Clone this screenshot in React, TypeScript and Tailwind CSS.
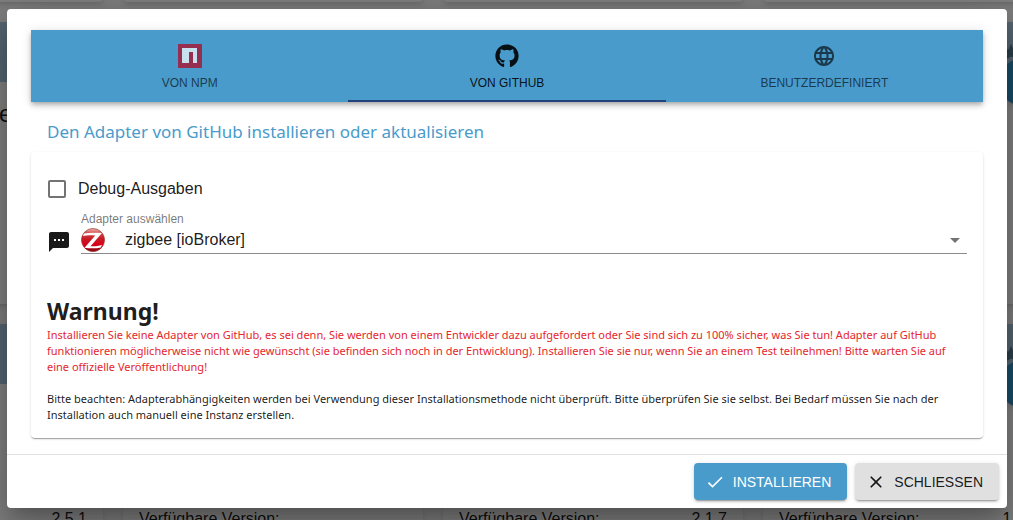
import React, { useState } from 'react';
import { FaGithub } from 'react-icons/fa';
import { MdArrowDropDown, MdCheck, MdClose, MdLanguage, MdSms, MdStar } from 'react-icons/md';

const adapters = [
  { title: 'e', label: '', version: '2.5.1' },
  { title: '', label: 'Verfügbare Version:', version: '' },
  { title: '', label: 'Verfügbare Version:', version: '2.1.7' },
  { title: '', label: 'Verfügbare Version:', version: '1.10.1' },
];

const NpmIcon = () => (
  <svg viewBox="0 0 24 24" className="h-6 w-6" aria-hidden="true">
    <path fill="#b6001b" d="M0 0h24v24H0z" />
    <path fill="#fff" d="M4 4h15v15h-4V8h-4v11H4z" />
  </svg>
);

const ZigbeeIcon = () => (
  <svg viewBox="0 0 24 24" className="h-6 w-6" aria-hidden="true">
    <defs>
      <linearGradient id="ball" x1="0" y1="0" x2="0" y2="1">
        <stop offset="0" stopColor="#efc0b8" />
        <stop offset="0.2" stopColor="#cf4a48" />
        <stop offset="0.45" stopColor="#c81a22" />
        <stop offset="0.7" stopColor="#dc001c" />
        <stop offset="1" stopColor="#7c0a10" />
      </linearGradient>
    </defs>
    <circle cx="12" cy="12" r="11.5" fill="url(#ball)" stroke="#a03030" strokeWidth="0.7" />
    <path fill="#fff" d="M3 5.500C8 4.500 15 4.500 21 5L9.500 18.300c4 .2 8-.2 11.500-1.200l-1.200 2.400c-4.600 1.100-10.500 1.100-16.300.2L14.200 7.500C9.500 7 5 7.300 1.800 8z" />
  </svg>
);

const AdapterCard = ({ title, label, version }: { title?: string; label?: string; version?: string }) => (
  <div className="h-[282px] rounded bg-white shadow-md">
    <div className="relative flex h-[60px] items-center gap-4 rounded-t bg-[#aacbe2] pl-[202px]">
      <MdStar className="h-5 w-5 text-[#5b7e95]" />
      <MdStar className="h-5 w-5 text-[#5b7e95]" />
      <div className="absolute right-4 -bottom-6 h-12 w-12 rounded-full bg-[#3399cc] shadow-md"></div>
    </div>
    <div className="h-[123px] pt-4 pl-[196px] text-2xl">{title}</div>
    <div className="flex justify-between px-4">
      <span>{label}</span>
      <span>{version}</span>
    </div>
  </div>
);

const Tab = ({ label, active, onClick, children }: { label: string; active: boolean; onClick: () => void; children: React.ReactNode }) => (
  <button
    type="button"
    role="tab"
    aria-selected={active}
    onClick={onClick}
    className={
      active
        ? 'flex flex-1 flex-col items-center gap-[7px] border-b-2 border-[#23427a] pt-3.5 text-xs text-black/90'
        : 'flex flex-1 flex-col items-center gap-[7px] border-b-2 border-transparent pt-3.5 text-xs text-black/90 opacity-70'
    }
  >
    {children}
    <span>{label}</span>
  </button>
);

const App: React.FC = () => {
  const [tab, setTab] = useState('github');
  const [debug, setDebug] = useState(false);

  return (
    <div className="relative h-screen overflow-hidden bg-[#fafafa] font-['Liberation_Sans',Arial,sans-serif] text-black/90">
      {/* adapter list behind the dialog */}
      <div className="-mt-[280px] -ml-[197px] grid w-max grid-cols-[repeat(4,300px)] gap-5" aria-hidden="true">
        {adapters.map((_, i) => (
          <AdapterCard key={i} />
        ))}
        {adapters.map((a, i) => (
          <AdapterCard key={i} title={a.title} />
        ))}
        {adapters.map((a, i) => (
          <AdapterCard key={i} label={a.label} version={a.version} />
        ))}
      </div>

      {/* dialog */}
      <div className="absolute inset-0 flex items-start justify-center bg-black/50 pt-[9px] pr-1.5 pb-3 pl-[7px]">
        <div
          role="dialog"
          className="w-full max-w-[1000px] rounded bg-white shadow-[0_11px_15px_-7px_rgba(0,0,0,0.2),0_24px_38px_3px_rgba(0,0,0,0.14),0_9px_46px_8px_rgba(0,0,0,0.12)]"
        >
          <div className="px-6 pt-[21px] pb-4">
            <div
              role="tablist"
              className="flex h-[72px] bg-[#499bcb] shadow-[0_2px_4px_-1px_rgba(0,0,0,0.2),0_4px_5px_0_rgba(0,0,0,0.14),0_1px_10px_0_rgba(0,0,0,0.12)]"
            >
              <Tab label="VON NPM" active={tab === 'npm'} onClick={() => setTab('npm')}>
                <NpmIcon />
              </Tab>
              <Tab label="VON GITHUB" active={tab === 'github'} onClick={() => setTab('github')}>
                <FaGithub className="h-6 w-6" />
              </Tab>
              <Tab label="BENUTZERDEFINIERT" active={tab === 'custom'} onClick={() => setTab('custom')}>
                <MdLanguage className="h-6 w-6" />
              </Tab>
            </div>

            <h2 className="px-4 pt-4 pb-1.5 font-['Noto_Sans',sans-serif] text-[17px] leading-7 text-[#499bcb]">
              Den Adapter von GitHub installieren oder aktualisieren
            </h2>

            <div className="rounded px-4 pt-[25px] pb-[15px] shadow-[0_2px_1px_-1px_rgba(0,0,0,0.2),0_1px_1px_0_rgba(0,0,0,0.14),0_1px_3px_0_rgba(0,0,0,0.12)]">
              <label className="flex items-center gap-3 pl-px text-base">
                <input
                  type="checkbox"
                  checked={debug}
                  onChange={(e) => setDebug(e.target.checked)}
                  className="h-[18px] w-[18px] appearance-none rounded-xs border-2 border-black/55 checked:bg-[#499bcb]"
                />
                Debug-Ausgaben
              </label>

              <div className="mt-2.5 flex items-end gap-2.5">
                <MdSms className="h-6 w-6 shrink-0" />
                <div className="flex-1">
                  <label htmlFor="adapter" className="block text-xs text-black/55">
                    Adapter auswählen
                  </label>
                  <div className="relative border-b border-black/45">
                    <select id="adapter" className="block h-[26px] w-full appearance-none bg-transparent pl-11 text-base">
                      <option>zigbee [ioBroker]</option>
                    </select>
                    <span className="pointer-events-none absolute top-px left-0">
                      <ZigbeeIcon />
                    </span>
                    <MdArrowDropDown className="pointer-events-none absolute top-px right-0 h-6 w-6 text-black/55" />
                  </div>
                </div>
              </div>

              <div className="mt-[41px] font-['Noto_Sans',sans-serif] text-[11px] leading-4">
                <h3 className="text-[23px] leading-8 font-bold">Warnung!</h3>
                <p className="text-[#e5262c]">
                  Installieren Sie keine Adapter von GitHub, es sei denn, Sie werden von einem Entwickler dazu aufgefordert oder Sie sind sich zu 100%
                  sicher, was Sie tun! Adapter auf GitHub funktionieren möglicherweise nicht wie gewünscht (sie befinden sich noch in der
                  Entwicklung). Installieren Sie sie nur, wenn Sie an einem Test teilnehmen! Bitte warten Sie auf eine offizielle
                  Veröffentlichung!
                </p>
                <p className="mt-4">
                  Bitte beachten: Adapterabhängigkeiten werden bei Verwendung dieser Installationsmethode nicht überprüft. Bitte überprüfen Sie
                  sie selbst. Bei Bedarf müssen Sie nach der Installation auch manuell eine Instanz erstellen.
                </p>
              </div>
            </div>
          </div>

          <div className="flex justify-end gap-2 border-t border-black/12 p-2 text-sm">
            <button
              type="button"
              className="flex h-[37px] items-center gap-2 rounded bg-[#499bcb] pr-4 pl-[11px] text-white shadow-[0_3px_1px_-2px_rgba(0,0,0,0.2),0_2px_2px_0_rgba(0,0,0,0.14),0_1px_5px_0_rgba(0,0,0,0.12)]"
            >
              <MdCheck className="h-5 w-5" />
              INSTALLIEREN
            </button>
            <button
              type="button"
              className="flex h-[37px] items-center gap-2 rounded bg-[#e0e0e0] pr-4 pl-[11px] shadow-[0_3px_1px_-2px_rgba(0,0,0,0.2),0_2px_2px_0_rgba(0,0,0,0.14),0_1px_5px_0_rgba(0,0,0,0.12)]"
            >
              <MdClose className="h-5 w-5" />
              SCHLIESSEN
            </button>
          </div>
        </div>
      </div>
    </div>
  );
};

export default App;
